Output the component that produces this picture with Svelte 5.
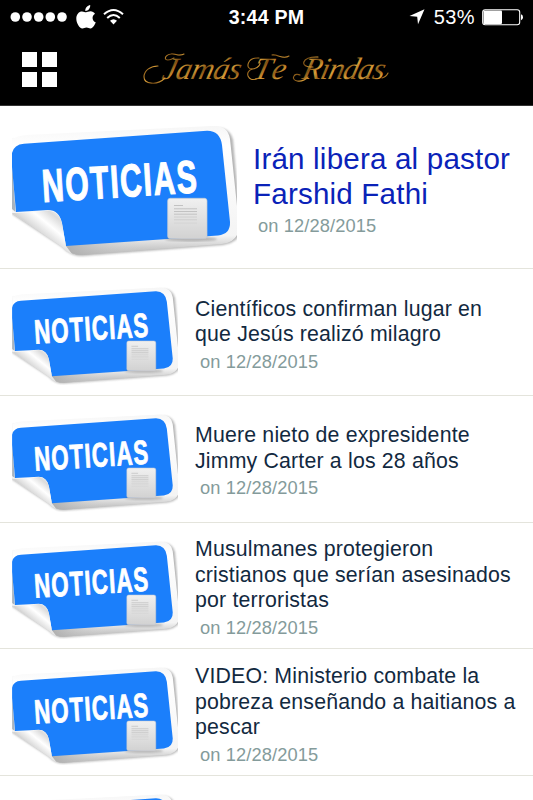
<script lang="ts">
  type Story = { lines: string[]; date: string };

  const featured: Story = {
    lines: ["Irán libera al pastor", "Farshid Fathi"],
    date: "12/28/2015",
  };

  const stories: Story[] = [
    {
      lines: ["Científicos confirman lugar en", "que Jesús realizó milagro"],
      date: "12/28/2015",
    },
    {
      lines: ["Muere nieto de expresidente", "Jimmy Carter a los 28 años"],
      date: "12/28/2015",
    },
    {
      lines: ["Musulmanes protegieron", "cristianos que serían asesinados", "por terroristas"],
      date: "12/28/2015",
    },
    {
      lines: ["VIDEO: Ministerio combate la", "pobreza enseñando a haitianos a", "pescar"],
      date: "12/28/2015",
    },
  ];
</script>

{#snippet badge(label: string)}
  <svg class="badge" viewBox="0 0 225 133">
    <defs>
      <linearGradient id="sheet" x1="0" y1="0" x2="0" y2="1">
        <stop offset="0" stop-color="#f6f6f6" />
        <stop offset="0.15" stop-color="#ffffff" />
        <stop offset="0.85" stop-color="#f4f4f4" />
        <stop offset="1" stop-color="#b5b5b5" />
      </linearGradient>
      <linearGradient id="curl" x1="16" y1="112" x2="42" y2="80" gradientUnits="userSpaceOnUse">
        <stop offset="0" stop-color="#a4a4a4" />
        <stop offset="0.3" stop-color="#dedede" />
        <stop offset="0.55" stop-color="#ffffff" />
        <stop offset="0.8" stop-color="#dcdcdc" />
        <stop offset="1" stop-color="#f2f2f2" />
      </linearGradient>
      <linearGradient id="paper" x1="0" y1="0" x2="0" y2="1">
        <stop offset="0" stop-color="#f0f0f0" />
        <stop offset="1" stop-color="#d2d2d2" />
      </linearGradient>
      <linearGradient id="fold" x1="50" y1="0" x2="130" y2="0" gradientUnits="userSpaceOnUse">
        <stop offset="0" stop-color="#a8a8a8" stop-opacity="0.9" />
        <stop offset="1" stop-color="#d8d8d8" stop-opacity="0" />
      </linearGradient>
      <filter id="soft" x="-10%" y="-10%" width="120%" height="120%">
        <feGaussianBlur stdDeviation="1.2" />
      </filter>
      <clipPath id="edge"><rect width="225" height="133" /></clipPath>
    </defs>
    <g clip-path="url(#edge)">
      <path
        d="M0 15 L206 3 Q218 3 221 15 L229 104 Q228 117 211 120 L70 131 Q58 131 50 122 L0 89 Z"
        fill="#8c8c8c"
        opacity="0.65"
        filter="url(#soft)"
      />
      <path
        d="M0 14 Q5 11 14 10 L200 1 Q216 0 218 14 L227 100 Q227 117 210 119 L70 130 Q58 130 50 121 L0 88 Z"
        fill="url(#sheet)"
      />
      <path d="M50 120 L130 115 L130 125 L70 130 Q58 130 50 121 Z" fill="url(#fold)" />
      <path d="M0 38 L3.5 87 L0 84 Z" fill="#a9b3bd" />
      <path
        d="M0 28 Q2 19.5 12 18.8 L195 5.7 Q208 5.5 210 20 L218 97 Q218.5 109 206 110.5 L54 121 L50 98 Q47 85 36 85 L4 87 L0 42 Z"
        fill="#1b7ffb"
      />
      <path d="M0 88 Q18 88 37 85.5 Q48 87 50 99 L54 121 L60 129 Q54 127 50 122 Z" fill="url(#curl)" />
    </g>
    <text transform="translate(31 77) rotate(-3.6) scale(0.655 1)" class="word">{label}</text>
    <ellipse cx="179" cy="114" rx="26" ry="2.5" fill="#777" opacity="0.45" filter="url(#soft)" />
    <rect x="155.7" y="73.3" width="39.3" height="40.3" rx="2.5" fill="url(#paper)" stroke="#c6cbd2" stroke-width="0.7" />
    <g stroke="#c2c2c2" stroke-width="1">
      <path d="M162 80.5h9M162 83.8h23M162 86.5h23M162 89.2h23" />
      <path d="M162 92h23M162 94.8h23" opacity="0.6" />
      <path d="M162 98h23" opacity="0.3" />
    </g>
  </svg>
{/snippet}

{#snippet row(story: Story, big: boolean)}
  <article class="row" class:big>
    {@render badge("NOTICIAS")}
    <div class="text">
      <h2>
        {#each story.lines as line}
          <span>{line}</span>
        {/each}
      </h2>
      <p>on {story.date}</p>
    </div>
  </article>
{/snippet}

<div class="screen">
  <header>
    <div class="status">
      <div class="left">
        <svg width="58" height="12" viewBox="0 0 58 12" fill="#fff">
          <circle cx="5.3" cy="6" r="4.8" />
          <circle cx="17" cy="6" r="4.8" />
          <circle cx="28.7" cy="6" r="4.8" />
          <circle cx="40.3" cy="6" r="4.8" />
          <circle cx="52" cy="6" r="4.8" />
        </svg>
        <svg class="apple" width="20" height="24" viewBox="0 0 20 24" fill="#fff">
          <path d="M14.2 0C14.5 3.3 12 6 9.3 5.9C9 3 11.6 .4 14.2 0Z" />
          <path
            d="M10 7.3C11.3 7.3 12.5 6.3 14.5 6.3C16.3 6.3 18 7.2 19 8.7C15.4 10.8 16 15.9 19.7 17.3C18.9 19.5 16.8 23.4 14.6 23.5C13 23.6 12.4 22.6 10.5 22.6C8.6 22.6 8 23.5 6.4 23.5C3.3 23.5 .3 18 .3 13.6C.3 9 3.1 6.4 6 6.4C7.8 6.4 9 7.3 10 7.3Z"
          />
        </svg>
        <svg class="wifi" width="21" height="16" viewBox="0 0 21 16" fill="none" stroke="#fff">
          <path d="M1 5.3Q10.5 -3.2 20 5.3" stroke-width="2" />
          <path d="M4.2 8.9Q10.5 3.2 16.8 8.9" stroke-width="2" />
          <path d="M7 11.8Q10.5 8.7 14 11.8L10.5 15.5Z" fill="#fff" stroke="none" />
        </svg>
      </div>
      <time>3:44 PM</time>
      <div class="right">
        <svg width="16" height="16" viewBox="0 0 16 16" fill="#fff">
          <path d="M15.5 .3L9 15.3L8.2 7.8L.5 7Z" />
        </svg>
        <span>53%</span>
        <svg class="battery" width="41" height="17" viewBox="0 0 41 17">
          <rect x="0.7" y="0.7" width="37" height="15" rx="2.5" fill="none" stroke="#fff" stroke-width="1.1" />
          <rect x="1.5" y="1.5" width="18.5" height="13.4" rx="1" fill="#fff" />
          <path d="M39 5.3Q41 5.6 41 8.3T39 11.3Z" fill="#fff" />
        </svg>
      </div>
    </div>
    <nav>
      <button class="menu" aria-label="Menu">
        <i></i><i></i><i></i><i></i>
      </button>
      <svg class="logo" width="250" height="40" viewBox="0 0 250 40">
        <defs>
          <linearGradient id="gold" x1="0" y1="0" x2="12" y2="8" gradientUnits="userSpaceOnUse" spreadMethod="reflect">
            <stop offset="0" stop-color="#7d5014" />
            <stop offset="0.5" stop-color="#d79c38" />
            <stop offset="1" stop-color="#93611a" />
          </linearGradient>
        </defs>
        <g class="name" fill="url(#gold)">
          <text transform="translate(20 29.5) skewX(-14)" textLength="78" lengthAdjust="spacing">Jamás</text>
          <text transform="translate(111 29.5) skewX(-14)" textLength="32" lengthAdjust="spacing">Te</text>
          <text transform="translate(160 29.5) skewX(-14)" textLength="82" lengthAdjust="spacing">Rindas</text>
        </g>
        <g fill="none" stroke="url(#gold)" stroke-width="1.1" stroke-linecap="round">
          <path d="M24 29C16 37 3 35 3 28C3 21 10 17 17 17" />
          <path d="M33 9C22 15 22 6 30 5C34 4 38 8 43 5" />
          <path d="M118 9C106 8 104 20 111 20C117 20 121 14 118 13" />
          <path d="M111 20C103 23 107 33 116 30" />
          <path d="M131 6C137 5 142 11 148 7" />
          <path d="M172 18C158 19 160 7 177 8" />
          <path d="M167 28C160 35 150 32 153 27C154 25 157 25 159 26" />
          <path d="M241 29C245 28 246 26 247 24" />
        </g>
      </svg>
    </nav>
  </header>

  <main>
    {@render row(featured, true)}
    {#each stories as story}
      {@render row(story, false)}
    {/each}
    <article class="row">{@render badge("")}</article>
  </main>
</div>

<style>
  :global(body) {
    background: #fff;
  }

  .screen {
    width: 533px;
    height: 800px;
    overflow: hidden;
    background: #fff;
    font-family: "Liberation Sans", Arial, sans-serif;
  }

  header {
    height: 106px;
    box-sizing: border-box;
    background: #000;
    border-bottom: 1px solid #333;
    color: #fff;
  }

  .status {
    display: grid;
    grid-template-columns: 1fr auto 1fr;
    align-items: center;
    height: 34px;
    padding: 0 10px;
  }

  .left,
  .right {
    display: flex;
    align-items: center;
  }

  .right {
    justify-content: flex-end;
    font-size: 20px;
    letter-spacing: 0.4px;
  }

  .apple {
    margin-left: 8px;
  }

  .wifi {
    margin-left: 7px;
  }

  .right span {
    margin: 1px 7px 0 9px;
  }

  time {
    font-size: 19.6px;
    font-weight: bold;
    letter-spacing: 0.2px;
    margin-top: 1px;
  }

  nav {
    display: flex;
    align-items: flex-start;
    padding: 15px 0 0 22px;
  }

  .menu {
    display: grid;
    grid-template-columns: 15px 15px;
    grid-auto-rows: 15px;
    gap: 5px;
    margin: 3px 0 0;
    padding: 0;
    border: 0;
    background: none;
  }

  .menu i {
    background: #fff;
  }

  .logo {
    margin-left: 84px;
    overflow: visible;
  }

  .name {
    font-family: "Liberation Serif", "Times New Roman", serif;
    font-style: italic;
    font-size: 31px;
  }

  .row {
    display: flex;
    align-items: flex-start;
    box-sizing: border-box;
    height: 126.7px;
    padding: 18px 0 0 12px;
    border-bottom: 1px solid #e4e4dc;
  }

  .big {
    height: 163.2px;
    padding-top: 19px;
  }

  .badge {
    display: block;
    flex: none;
    width: 166px;
    height: 98px;
    overflow: visible;
  }

  .big .badge {
    width: 225px;
    height: 133px;
  }

  .word {
    font-family: "Liberation Sans", Arial, sans-serif;
    font-size: 46px;
    font-weight: bold;
    letter-spacing: 2.4px;
    fill: #fff;
    stroke: #fff;
    stroke-width: 1.2px;
  }

  .text {
    display: flex;
    flex-direction: column;
    justify-content: center;
    height: 126px;
    margin: -15px 0 0 17px;
    white-space: nowrap;
  }

  h2 {
    margin: 0;
    font-size: 21.3px;
    font-weight: normal;
    line-height: 25.5px;
    letter-spacing: 0.18px;
    color: #12293f;
  }

  h2 span {
    display: block;
  }

  p {
    margin: 1px 0 0 5px;
    font-size: 18.3px;
    line-height: 25px;
    letter-spacing: 0.1px;
    color: #849b9b;
  }

  .big h2 {
    font-size: 29.6px;
    line-height: 35px;
    letter-spacing: 0.18px;
    color: #0a22b8;
  }

  .big .text {
    margin: 1px 0 0 16px;
  }

  .big p {
    margin-top: 2px;
  }
</style>
